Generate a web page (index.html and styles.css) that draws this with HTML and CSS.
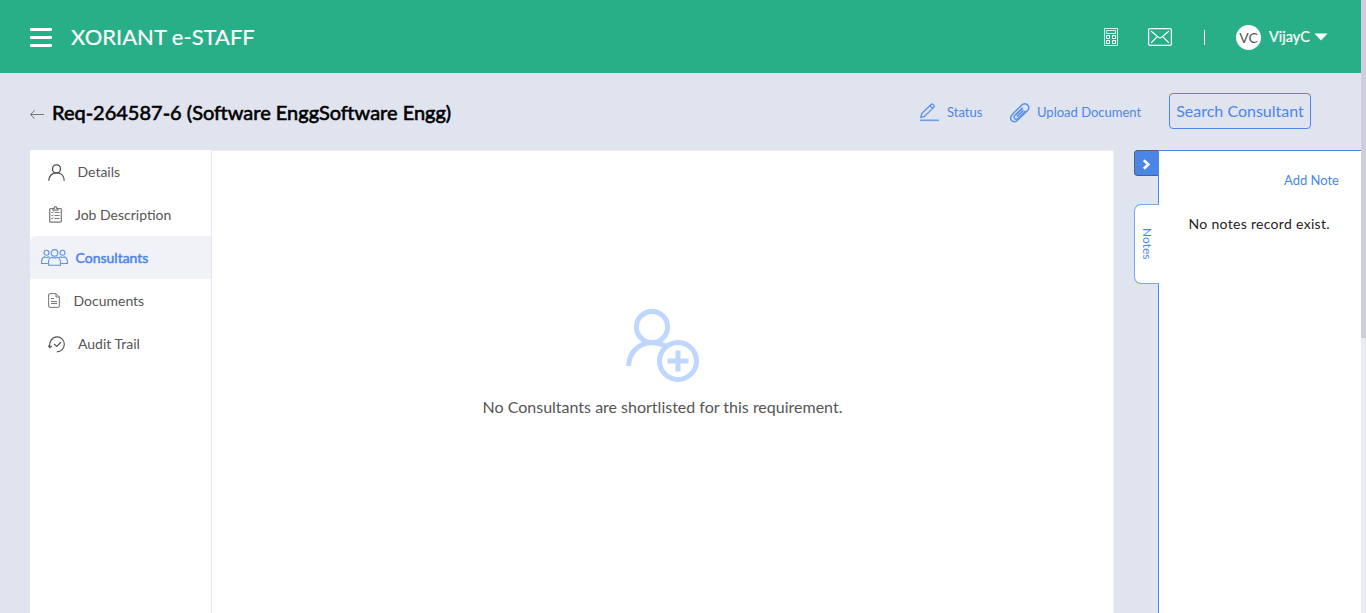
FILE: index.html
```html
<!DOCTYPE html>
<html lang="en">
<head>
<meta charset="utf-8">
<title>XORIANT e-STAFF</title>
<link rel="stylesheet" href="styles.css">
</head>
<body>
<div class="app">
  <header class="topbar">
    <button class="burger" aria-label="Menu"><i></i><i></i><i></i></button>
    <div class="brand">XORIANT e-STAFF</div>
    <svg class="calc" width="14" height="18" viewBox="0 0 14 18" fill="none" stroke="#fff"><path stroke-opacity=".8" d="M.5.5h13v17H.5zM2.500 2.500h9v3h-9z"/><path d="M2.500 7.500h3v3h-3zM8.500 7.500h3v3h-3zM2.500 12.500h3v3h-3zM8.500 12.500h3v3h-3z"/></svg>
    <svg class="mail" width="24" height="18" viewBox="0 0 24 18" fill="none" stroke="#fff" stroke-width="1.200"><rect x=".6" y=".6" width="22.800" height="16.800" rx="1.500"/><path d="M3 3l7.600 6.400q1.400 1.100 2.800 0L21 3M3 15l6.300-6.300M21 15l-6.300-6.300"/></svg>
    <span class="divider"></span>
    <span class="avatar">VC</span>
    <span class="user">VijayC</span>
    <svg class="caret" width="14" height="8" viewBox="0 0 14 8"><path fill="#fff" d="M.5.500h13L7 7.500z"/></svg>
  </header>

  <div class="titlebar">
    <svg class="back" width="15" height="10" viewBox="0 0 15 10" fill="none" stroke="#777"><path d="M14 4.500H.8M4.600.2L.6 4.500l4 4.300"/></svg>
    <h1 class="title">Req-264587-6 (Software EnggSoftware Engg)</h1>
    <svg class="pen" width="19" height="19" viewBox="0 0 19 19" fill="none" stroke="#5b91ea" stroke-width="1.300"><path d="M.9 14.300L1.700 10.600 11.300 1.300q.7-.7 1.400 0l1.300 1.400q.7.700 0 1.400L4.400 13.400zM9.800 2.700l2.800 2.800"/><path stroke-width="1.600" stroke="#6f9fee" d="M0 17.300h19"/></svg>
    <a class="action status">Status</a>
    <svg class="clip" width="20" height="20" viewBox="0 0 20 20" fill="none" stroke="#5b91ea" stroke-width="1.500" stroke-linecap="round"><path d="M15.200 8.300L8 15.600c-1.400 1.400-3.200.6-3.700-.4-.6-1-.2-2 .5-2.700l7-7M13 7.600L7.300 13.300M12.500 5.200L6 11.700M4 9.800l7.600-7.600c1.800-1.800 4-1.600 5.600-.6 2 1.400 2.200 4 .6 5.700L7.500 17.300c-1.800 1.800-4.300 1.900-5.800.3-1.500-1.500-1.300-3.700.1-5.300L4 9.800"/></svg>
    <a class="action upload">Upload Document</a>
    <button class="search">Search Consultant</button>
  </div>

  <main class="workspace">
    <nav class="menu">
      <a class="item"><svg class="i-person" width="17" height="17" viewBox="0 0 17 17" fill="none" stroke="#4d4d4d" stroke-width="1.300"><circle cx="8.500" cy="4.900" r="4"/><path d="M.8 16.700C.8 11.800 4 8.900 8.500 8.900s7.700 2.900 7.700 7.800"/></svg><span>Details</span></a>
      <a class="item"><svg class="i-board" width="13" height="17" viewBox="0 0 13 17" fill="none" stroke="#777"><path stroke-width="1.200" d="M4 2.500H1.800Q.7 2.500.7 3.600v11.300q0 1.300 1.200 1.300h9.200q1.200 0 1.200-1.200V3.600q0-1.100-1.100-1.100H9M4 4.200V2.300h1.300Q5.400.7 6.500.7t1.200 1.600H9v1.900z"/><path d="M5.500 6.500h5M5.500 9.500h5M5.500 12.500h5M2.300 6.300l.8.800 1.400-1.500M2.300 9.300l.8.800 1.400-1.500M2.300 12.300l.8.800 1.400-1.500"/></svg><span>Job Description</span></a>
      <a class="item active"><svg class="i-group" width="27" height="17" viewBox="0 0 27 17" fill="none" stroke="#5b91ea" stroke-width="1.100"><circle cx="13.500" cy="3.900" r="3.300"/><circle cx="5.500" cy="3.700" r="2.500"/><circle cx="21.500" cy="3.700" r="2.500"/><path d="M7.500 16.300v-3.100C7.500 10.500 9 8.800 11.200 8.200q2.300 1.700 4.600 0c2.200.6 3.700 2.300 3.700 5v3.100zM6.800 14.500H.6v-2.200C.6 10 2 8.500 3.700 7.800q1.800 1.400 3.600 0l1.500.8M20.200 14.500h6.200v-2.200c0-2.300-1.400-3.800-3.100-4.500q-1.800 1.400-3.600 0l-1.500.8"/></svg><span>Consultants</span></a>
      <a class="item"><svg class="i-doc" width="12" height="15" viewBox="0 0 12 15" fill="none" stroke="#777"><path d="M.6 2Q.6.600 2 .6h6L11.400 4v9q0 1.400-1.400 1.400H2Q.6 14.400.6 13zM8 .6V4h3.400M3 5.500h3M3 8.500h6M3 10.500h6"/></svg><span>Documents</span></a>
      <a class="item"><svg class="i-audit" width="17" height="17" viewBox="0 0 17 17" fill="none" stroke="#555" stroke-width="1.200"><path d="M1.900 11.500C.7 6 4 .9 9 .9c4.200 0 7.300 3.300 7.300 7.300 0 4.300-3.300 7.600-7.500 7.600M.2 9.500l1.700 2.200 2-1.800M6 8l2.800 2.500L13 6"/></svg><span>Audit Trail</span></a>
    </nav>
    <section class="content">
      <svg class="add-user" width="73" height="73" viewBox="0 0 73 73" fill="none" stroke="#bfd7ff" stroke-width="5"><circle cx="26" cy="18" r="15.600"/><path d="M2.600 57C3 43 13 33.800 26 33.800q7 0 14 3.200"/><circle cx="52" cy="52" r="18.500"/><path d="M52 41.500v21M41.500 52h21"/></svg>
      <p class="empty">No Consultants are shortlisted for this requirement.</p>
    </section>
    <aside class="side">
      <div class="tabs">
        <button class="toggle" aria-label="Collapse"><svg width="9" height="11" viewBox="0 0 9 11" fill="none" stroke="#fff" stroke-width="2.600"><path d="M1.800 1.200L6.300 5.500 1.800 9.800"/></svg></button>
        <div class="tab"><span>Notes</span></div>
      </div>
      <div class="notes">
        <a class="add-note">Add Note</a>
        <p class="no-notes">No notes record exist.</p>
      </div>
    </aside>
  </main>
</div>
<div class="scroll"><div class="thumb"></div></div>
</body>
</html>
```
FILE: styles.css
```css
* { box-sizing: border-box; }
body { margin: 0; display: flex; height: 613px; overflow: hidden; background: #e0e4ef; font-family: Lato, "Liberation Sans", sans-serif; }
h1, p { margin: 0; }
button { font: inherit; padding: 0; border: 0; background: none; }
svg { display: block; flex: none; }
a, span, h1, p { white-space: nowrap; }
.app { width: 1361px; display: flex; flex-direction: column; }
.scroll { width: 5px; background: #ebebf5; }
.thumb { height: 338px; background: #cdcddd; }

.topbar { height: 73px; flex: none; display: flex; align-items: center; padding: 0 33px 0 30px; background: #29af87; color: #fff; }
.burger { width: 22px; margin-top: 2px; display: grid; gap: 5px; }
.burger i { height: 3px; background: #fff; border-radius: 1px; }
.brand { margin-left: 19px; font-size: 22px; line-height: 26px; -webkit-text-stroke: .2px #fff; }
.calc { margin-left: auto; }
.mail { margin-left: 30px; }
.divider { width: 1px; height: 15px; margin: 1px 0 0 32px; background: #fff; }
.avatar { width: 25px; height: 25px; margin: 1px 0 0 31px; border-radius: 50%; background: #fff; color: #555; font-size: 14px; line-height: 25px; text-align: center; }
.user { width: 40px; margin-left: 8px; font-size: 14.500px; -webkit-text-stroke: .2px #fff; }
.caret { margin-left: 5px; }

.titlebar { height: 77px; flex: none; display: flex; align-items: center; padding: 0 50px 0 30px; color: #4c86e6; }
.back { margin: 7px 7px 0 0; }
.title { margin-top: 1px; font-size: 20px; line-height: 26px; font-weight: 400; color: #000; -webkit-text-stroke: .6px #000; }
.pen { margin: 2px 8px 0 auto; }
.action { font-size: 13px; line-height: 18px; }
.status { width: 36px; }
.clip { margin: 3px 7px 0 27px; }
.upload { width: 105px; }
.search { width: 142px; height: 36px; margin: 0 0 1px 27px; padding-bottom: 2px; border: 1px solid #4c86e6; border-radius: 4px; color: #4c86e6; font-size: 16px; }

.workspace { flex: 1; display: flex; padding-left: 30px; }
.menu { width: 182px; background: #fff; border-right: 1px solid #e6e8f0; }
.item { height: 43px; display: flex; align-items: center; color: #555; font-size: 14px; }
.active { background: #f1f2f8; border-radius: 6px 0 0 0; color: #4c86e6; -webkit-text-stroke: .5px #4c86e6; }
.i-person { margin: 1px 12.500px 0 18px; }
.i-board { margin: 0 13px 0 19px; }
.i-group { margin: 0 7.500px 0 11px; }
.i-doc { margin: 0 13.500px 0 18px; }
.i-audit { margin: 1px 13px 0 18px; }
.content { width: 902px; padding-top: 158px; border: solid #eceef5; border-width: 1px 1px 0 0; background: #fff; display: flex; flex-direction: column; align-items: center; }
.empty { margin-top: 15px; font-size: 16px; line-height: 20px; color: #555; }
.side { width: 247px; display: flex; padding-left: 20px; }
.tabs { width: 25px; z-index: 1; }
.toggle { width: 24px; height: 26px; display: flex; align-items: center; padding: 3px 0 0 7px; border: 1px solid #555f75; border-right: 0; border-radius: 4px 0 0 4px; background: #4a86e8; }
.tab { width: 25px; height: 80px; margin-top: 28px; border: 1px solid #78a6f0; border-right: 0; border-radius: 7px 0 0 7px; background: #fff; display: flex; align-items: center; justify-content: center; color: #4a86e8; font-size: 12px; }
.tab span { writing-mode: vertical-rl; }
.notes { flex: 1; margin-left: -1px; border: solid #4a86e8; border-width: 1px 0 0 1px; background: #fff; display: flex; flex-direction: column; padding: 20px 22px 0 29.500px; }
.add-note { align-self: flex-end; color: #4a86e8; font-size: 13px; line-height: 18px; }
.no-notes { margin-top: 25px; color: #222; font-size: 14px; line-height: 20px; letter-spacing: .31px; }
```
